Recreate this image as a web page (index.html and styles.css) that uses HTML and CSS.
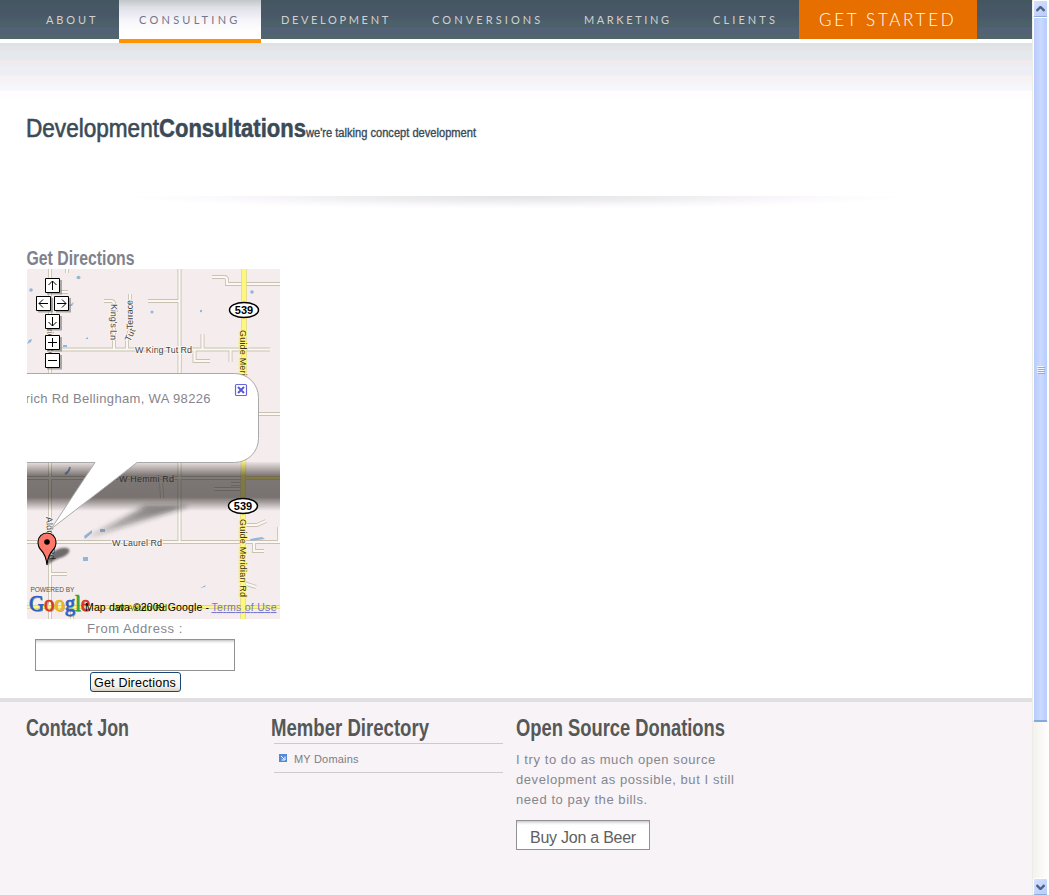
FILE: index.html
```html
<!DOCTYPE html>
<html lang="en">
<head>
<meta charset="utf-8">
<title>Development Consultations</title>
<link rel="stylesheet" href="styles.css">
</head>
<body>
<div class="window">
<div class="page">
  <nav class="nav">
    <a class="tab about">ABOUT</a><a class="tab consulting active">CONSULTING</a><a class="tab development">DEVELOPMENT</a><a class="tab conversions">CONVERSIONS</a><a class="tab marketing">MARKETING</a><a class="tab clients">CLIENTS</a><a class="tab start">GET STARTED</a>
  </nav>
  <div class="band"></div>
  <main class="main">
    <svg class="title" width="460" height="36" viewBox="26 112 460 36">
      <text class="light" x="26" y="137" font-size="25" textLength="133" lengthAdjust="spacingAndGlyphs">Development</text>
      <text class="heavy" x="159" y="137" font-size="25" textLength="147" lengthAdjust="spacingAndGlyphs">Consultations</text>
      <text class="tagline" x="306" y="137" font-size="12" textLength="170" lengthAdjust="spacingAndGlyphs">we're talking concept development</text>
    </svg>
    <div class="divider"></div>
    <svg class="subtitle" width="120" height="29" viewBox="26 240 120 29">
      <text x="26.500" y="265" font-size="19.500" textLength="108" lengthAdjust="spacingAndGlyphs">Get Directions</text>
    </svg>
    <svg class="map" width="253" height="350" viewBox="27 269 253 350">
      <defs>
        <linearGradient id="band" x1="0" y1="0" x2="0" y2="1">
          <stop offset="0" stop-color="#25201d" stop-opacity=".05"/><stop offset=".28" stop-color="#25201d" stop-opacity=".58"/>
          <stop offset=".72" stop-color="#25201d" stop-opacity=".6"/><stop offset="1" stop-color="#25201d" stop-opacity="0"/>
        </linearGradient>
        <linearGradient id="tail" x1="1" y1="0" x2="0" y2="1">
          <stop offset="0" stop-color="#222" stop-opacity=".6"/><stop offset="1" stop-color="#222" stop-opacity=".2"/>
        </linearGradient>
        <filter id="soft" x="-30%" y="-30%" width="160%" height="160%"><feGaussianBlur stdDeviation="2.500"/></filter>
        <filter id="soft2" x="-30%" y="-30%" width="160%" height="160%"><feGaussianBlur stdDeviation="1.300"/></filter>
        <g id="roads" fill="none">
          <path d="M50 269V619M179.500 269V541M50 349.500H270M67 269V273M60 292H68M104 301H111Q114 301 114 304V349M130 294V330L127 338V349M148 301H179M212 277H224Q227 277 227 280V284H280M202.500 334V349M230.500 349V362M194.500 349V361H210M258 414H280M27 478H280M161 480L162 498M231 484H242M214 489H242M27 542H280M50 574H67M245 525H257L266 521M254 542V551H264M244 583L256 587M279 527V541M179.500 378L180 349M72 607V619"/>
        </g>
      </defs>
      <rect x="27" y="269" width="253" height="350" fill="#f5eded"/>
      <use href="#roads" stroke="#c9c2b3" stroke-width="4"/>
      <use href="#roads" stroke="#fbf8f3" stroke-width="2.200"/>
      <g fill="#94b5da">
        <ellipse cx="78.500" cy="277.500" rx="2" ry="1.800"/><circle cx="31" cy="290" r="1.800"/><path d="M68 306l6-4-2 4zM27 344l2-4 3-1-1 3zM85 339l3-2 0 2zM63 345h4v2h-4zM84 536l8-6 0 3-7 6zM100 529h5v3h-5zM83 557h5v4h-5zM200 588l6-3-1 2zM250 539l12-2 3 2-14 2z"/>
        <circle cx="152" cy="312" r="1.500"/><circle cx="201" cy="311" r="1.200"/><circle cx="252" cy="292" r="1.800"/>
      </g>
      <path d="M65 474q4-2 5-7" fill="none" stroke="#719ac2" stroke-width="2"/>
      <path d="M27 607H280M243 478H280" stroke="#d6cf91" stroke-width="4"/><path d="M27 607H280M243 478H280" stroke="#fff77f" stroke-width="2.400"/>
      <path d="M244 269V420L243 500V619" fill="none" stroke="#d8d183" stroke-width="5.500"/><path d="M244 269V420L243 500V619" fill="none" stroke="#fff77c" stroke-width="4.400"/>
      <g class="road-label">
        <text x="135" y="353" textLength="57">W King Tut Rd</text><text x="119" y="482" textLength="55">W Hemmi Rd</text><text x="112" y="545.500" textLength="50">W Laurel Rd</text>
        <text transform="translate(111 304) rotate(91)" textLength="36">King's Ln</text>
        <text transform="translate(130 342) rotate(-65)" textLength="13">Tut</text><text transform="translate(133 329) rotate(-91)" textLength="29">Terrace</text>
        <text transform="translate(46 517) rotate(86)" textLength="43">Aldrich Rd</text><text transform="translate(47 329) rotate(88)" textLength="28">rich Rd</text>
        <text class="yellow" transform="translate(240 330) rotate(90)" textLength="78">Guide Meridian Rd</text><text class="yellow" transform="translate(239.500 519) rotate(90)" textLength="78">Guide Meridian Rd</text>
        <text class="yellow" x="116" y="611" textLength="51">W Axton Rd</text>
      </g>
      <rect x="27" y="462" width="253" height="49" fill="url(#band)"/>
      <path d="M189 506L84 539L145 506z" fill="url(#tail)" filter="url(#soft)"/>
      <g class="shield"><ellipse cx="244" cy="310" rx="14.500" ry="7.500"/><text x="244" y="314">539</text><ellipse cx="243" cy="506" rx="14.500" ry="7.500"/><text x="243" y="510">539</text></g>
      <path d="M26 373.500H234.500A24 24 0 0 1 258.500 397.500V438.500A24 24 0 0 1 234.500 462.500H137L51 529L95 462.500H26z" fill="#fff" stroke="#aaa8ab"/>
      <text class="address" x="25.500" y="403" textLength="185">rich Rd Bellingham, WA 98226</text>
      <rect x="235.500" y="384.500" width="11" height="11" rx="1" fill="#fff" stroke="#6666dd" stroke-width="1.200"/><path d="M238 387l6 6m0-6l-6 6" stroke="#5959d4" stroke-width="2"/>
      <path d="M47 565Q49 555 56 550Q64 546 69 549Q71 553 63 557Q55 559 47 565" fill="#000" opacity=".55" filter="url(#soft2)"/>
      <path d="M47 565Q46 555 41 550Q38 547 38 542A9 9 0 0 1 56 542Q56 547 53 550Q48 555 47 565" fill="#ff766a" stroke="#000" stroke-width="1.100"/><circle cx="47" cy="542" r="2.800"/>
      <g id="controls" fill="none">
        <path d="M47 293.500H61V280M38 311.500H52V298M56 311.500H70V298M47 329.500H61V316M47 350.500H61V337M47 368.500H61V355" stroke="#777" stroke-width="2" opacity=".6"/>
        <g fill="#fff" stroke="#000"><path d="M45.500 278.500h14v14h-14zM36.500 296.500h14v14h-14zM54.500 296.500h14v14h-14zM45.500 314.500h14v14h-14zM45.500 335.500h14v14h-14zM45.500 353.500h14v14h-14z"/></g>
        <path d="M52.500 290v-9m-4 4l4-4 4 4M48 303.500h-9m4-4l-4 4 4 4M57 303.500h9m-4-4l4 4-4 4M52.500 317v9m-4-4l4 4 4-4M48 342.500h9m-4.500-4.500v9M48 360.500h9" stroke="#000"/>
      </g>
      <text class="powered" x="30.500" y="592" textLength="44">POWERED BY</text>
      <g class="logo"><g class="logo-shade"><text x="30" y="612" textLength="61" lengthAdjust="spacingAndGlyphs">Google</text></g><text x="29" y="611" textLength="61" lengthAdjust="spacingAndGlyphs"><tspan class="blue">G</tspan><tspan class="red">o</tspan><tspan class="gold">o</tspan><tspan class="blue">g</tspan><tspan class="green">l</tspan><tspan class="red">e</tspan></text></g>
      <text class="credit" x="85" y="611" textLength="124">Map data ©2009 Google - </text><text class="credit terms" x="211.500" y="611" textLength="65">Terms of Use</text>
    </svg>
    <form class="directions">
      <label>From Address :</label>
      <div class="field"></div>
      <button type="button" class="go">Get Directions</button>
    </form>
  </main>
  <footer class="footer">
    <section class="col"><svg class="heading" width="240" height="34"><text x="0" y="24" textLength="103" lengthAdjust="spacingAndGlyphs">Contact Jon</text></svg></section>
    <section class="col"><svg class="heading" width="240" height="34"><text x="0" y="24" textLength="158" lengthAdjust="spacingAndGlyphs">Member Directory</text></svg>
      <div class="listing"><svg width="8" height="8" viewBox="0 0 8 8"><path d="M0 0h8v8H0z" fill="#5688d3"/><path d="M2 2l3.500 3.500M6 2.500V6H2.500" stroke="#fff" fill="none"/></svg><span>MY Domains</span></div>
    </section>
    <section class="col"><svg class="heading" width="240" height="34"><text x="0" y="24" textLength="209" lengthAdjust="spacingAndGlyphs">Open Source Donations</text></svg>
      <p>I try to do as much open source<br>development as possible, but I still<br>need to pay the bills.</p>
      <button type="button" class="beer">Buy Jon a Beer</button>
    </section>
  </footer>
</div>
<aside class="scrollbar">
  <div class="arrow"><svg width="9" height="6"><path d="M.500 5L4.500 1L8.500 5" /></svg></div>
  <div class="thumb"><i></i><i></i><i></i><i></i></div>
  <div class="track"></div>
  <div class="arrow"><svg width="9" height="6"><path d="M.500 1L4.500 5L8.500 1" /></svg></div>
</aside>
</div>
</body>
</html>
```
FILE: styles.css
```css
* { box-sizing: border-box; }
body { margin: 0; overflow: hidden; font-family: "Liberation Sans", sans-serif; }
svg { display: block; }
.window { display: flex; width: 1049px; height: 895px; background: #fff; }
.page { width: 1032px; display: flex; flex-direction: column; }
.nav { height: 43px; display: flex; padding-left: 26px; background: linear-gradient(#445660 0 4px, #485766 5px 14px, #49596a 17px, #4b6069 22px 26px, #526175 28px 33px, #53656c 35px 39px, #fff 39px); }
.tab { padding-left: 20px; height: 39px; line-height: 40px; font-family: Lato, sans-serif; font-size: 11px; color: #d0d0cf; letter-spacing: 3px; white-space: nowrap; }
.about { width: 93px; letter-spacing: 2.9px; }
.consulting { width: 142px; letter-spacing: 3.25px; }
.development { width: 151px; letter-spacing: 2.65px; }
.conversions { width: 152px; letter-spacing: 3.1px; }
.marketing { width: 129px; letter-spacing: 2.6px; }
.clients { width: 106px; letter-spacing: 3.1px; }
.active { height: 43px; color: #73778a; border-bottom: 4px solid #ff9400; background: linear-gradient(#c2c6c8, #dcdfe4 7px, #e9e9f3 13px, #f8f8fb 22px, #fff 33px); }
.start { width: 178px; background: #e76f00; color: #fff; font-size: 17px; font-weight: 300; letter-spacing: 2.7px; }
.band { height: 57px; background: linear-gradient(#dce2e5 0 2px, #e3e4e4 4px 6px, #e5e7ef 8px, #e5e9ec 14px 16px, #f0eaec 18px 20px, #ededf5 23px 31px, #f7f2f4 34px 38px, #f5f7fd 43px 47px, #fffdff 48px, #fff); }
.main { height: 598px; padding: 12px 26px 0; }
.title { fill: #3a4a56; overflow: visible; }
.title text, .subtitle text, .heading text { font-family: "Liberation Sans", sans-serif; font-weight: bold; }
.title .light { font-weight: normal; stroke: #3a4a56; stroke-width: .6px; }
.title .heavy { stroke: #3a4a56; stroke-width: .5px; }
.title .tagline { font-weight: normal; stroke: #3a4a56; stroke-width: .35px; }
.divider { height: 14px; margin: 48px 90px 30px; background: radial-gradient(ellipse 390px 13px at 50% 0, #e2e1e4, #f0eff0 45%, #fbf9fc 78%, #fff 100%); }
.subtitle { fill: #7f828d; }
.map { margin-left: 1px; }
.road-label { font-size: 9px; fill: #444; stroke: #f8f4f1; stroke-width: 2px; paint-order: stroke; }
.road-label .yellow { stroke: #fff77c; fill: #37351e; }
.shield ellipse { fill: #fff; stroke: #000; stroke-width: 1.5px; }
.shield text { font-size: 11px; font-weight: bold; text-anchor: middle; }
.address { font-size: 13px; fill: #85858d; }
.powered { font-size: 6.6px; fill: #555; }
.logo text { font: 23px "Liberation Serif", serif; stroke-width: .7px; }
.logo-shade { fill: #777; opacity: .6; }
.blue { fill: #2860cb; stroke: #2860cb; }
.red { fill: #d93328; stroke: #d93328; }
.gold { fill: #edb51d; stroke: #edb51d; }
.green { fill: #36a52b; stroke: #36a52b; }
.credit { font-size: 10.5px; }
.terms { fill: #7777cc; text-decoration: underline; }
.directions { display: flex; flex-direction: column; align-items: center; width: 200px; margin-left: 9px; color: #85878e; font-size: 13px; letter-spacing: .55px; }
.directions label { height: 20px; line-height: 20px; }
.field { width: 200px; height: 32px; border: 1px solid #929294; background: linear-gradient(#c7c7c9, #eee 2px, #fff 4px); }
.go { width: 91px; height: 20px; margin-top: 1px; padding: 1px 0 0; border: 1px solid #174677; border-radius: 3px; background: linear-gradient(#fff, #f3f1e9 75%, #d8d1c3); color: #000; font: 12.5px "Liberation Sans", sans-serif; letter-spacing: .2px; }
.footer { height: 197px; padding: 10px 26px 0; display: flex; border-top: 4px solid #e0dfe1; background: #f7f3f7; }
.col { width: 245px; }
.heading { fill: #555857; font-size: 23px; }
.listing { display: flex; align-items: center; gap: 7px; width: 229px; height: 30px; margin: -3px 0 0 3px; padding-left: 5px; border: solid #cccacf; border-width: 1px 0; color: #7d7e86; font-size: 11px; letter-spacing: .2px; }
.listing span { padding-top: 2px; }
.col p { margin: 4px 0 0; color: #85878e; font-size: 13px; line-height: 20px; letter-spacing: .57px; white-space: nowrap; }
.beer { width: 134px; height: 30px; margin-top: 10px; padding: 5px 0 0; border: 1px solid #929294; background: linear-gradient(#c7c7c9, #eee 2px, #fff 4px); color: #606060; font: 16px "Liberation Sans", sans-serif; letter-spacing: -.25px; }
.scrollbar { width: 17px; display: flex; flex-direction: column; border-left: 1px solid #eeede5; background: linear-gradient(90deg, #f3f1ec, #fff); }
.arrow { height: 17px; margin-right: 1px; border: 1px solid #fff; border-bottom-color: #8fadd8; border-radius: 2px; background: linear-gradient(135deg, #d5e1ff, #b8cbf8); display: grid; place-items: center; }
.arrow path { fill: none; stroke: #4d6185; stroke-width: 2.4; }
.thumb { height: 705px; margin-right: 1px; border: 1px solid #fff; border-bottom: 2px solid #86a8dd; border-radius: 2px; background: linear-gradient(90deg, #b9ccfb, #cad9ff 50%, #b8cdfc); display: flex; flex-direction: column; align-items: center; justify-content: center; gap: 1px; }
.thumb i { width: 7px; height: 1px; background: #f2f7ff; box-shadow: 1px 1px #8cacef; }
.track { flex: 1; }
```
